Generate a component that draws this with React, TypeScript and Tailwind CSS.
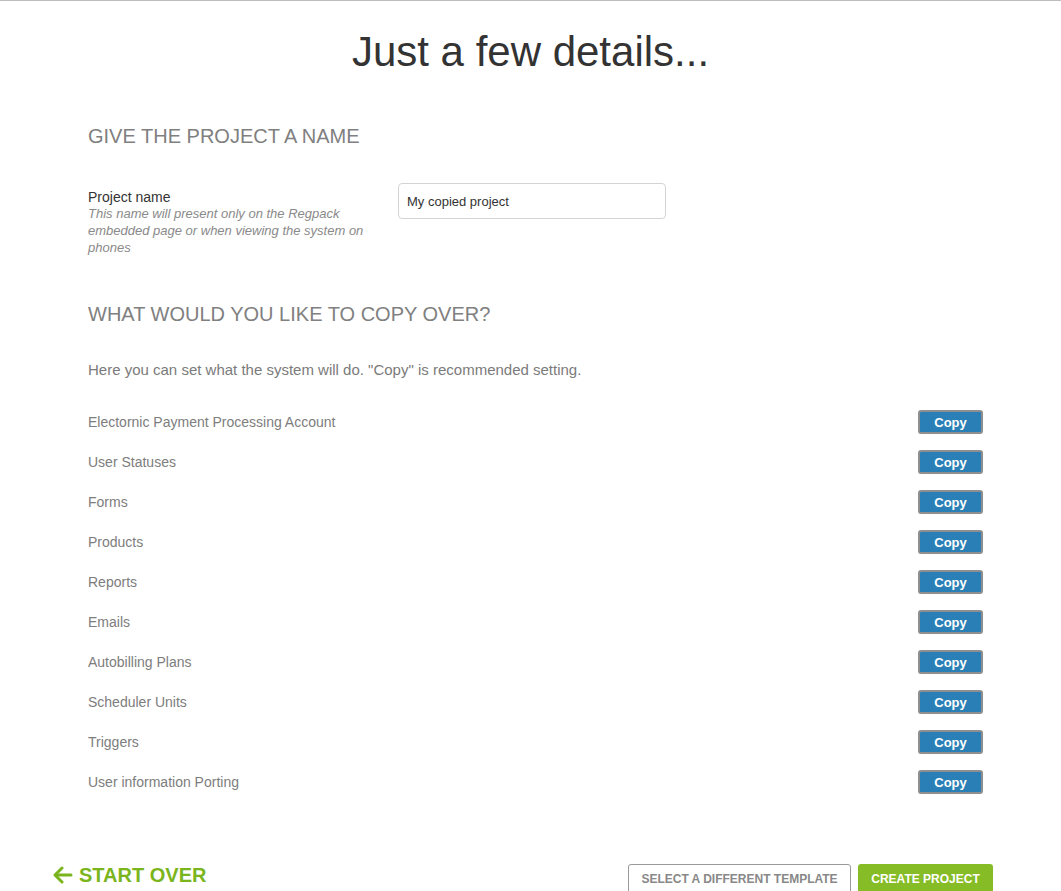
import React from 'react';

const items = [
  'Electornic Payment Processing Account',
  'User Statuses',
  'Forms',
  'Products',
  'Reports',
  'Emails',
  'Autobilling Plans',
  'Scheduler Units',
  'Triggers',
  'User information Porting',
];

const ArrowLeft = () => (
  <svg width="20" height="18" viewBox="0 0 20 18" fill="none" stroke="currentColor" strokeWidth="3" strokeLinecap="round" strokeLinejoin="round">
    <path d="M18 9H3" />
    <path d="M9 2L2 9l7 7" />
  </svg>
);

export default function App() {
  return (
    <div className="min-h-[891px] bg-white border-t border-[#bdbdbd] font-['Liberation_Sans',Arial,sans-serif] text-[#333]">
      <h1 className="pt-[26px] text-center text-[42px] leading-[50px] text-[#333]">
        Just a few details...
      </h1>

      <div className="ml-[88px] w-[895px]">
        <h2 className="mt-[48px] text-[20px] leading-[22px] text-[#808080] uppercase">Give the project a name</h2>

        <div className="mt-[36px] flex">
          <div className="w-[310px] pt-[6px]">
            <div className="text-[14px] leading-[16px] text-[#333]">Project name</div>
            <div className="w-[285px] text-[13px] leading-[17px] italic text-[#8a8a8a]">
              This name will present only on the Regpack embedded page or when viewing the system on phones
            </div>
          </div>
          <div>
            <input
              readOnly
              value="My copied project"
              className="w-[268px] h-[36px] rounded-[4px] border border-[#d4d4d4] px-[8px] text-[13px] text-[#333] outline-none"
            />
          </div>
        </div>

        <h2 className="mt-[47px] text-[20px] leading-[22px] text-[#808080] uppercase">What would you like to copy over?</h2>

        <p className="mt-[36px] text-[15px] leading-[18px] text-[#7b7b7b]">
          Here you can set what the system will do. "Copy" is recommended setting.
        </p>

        <div className="mt-[23px] flex flex-col">
          {items.map((item) => (
            <div key={item} className="h-[40px] flex items-center justify-between">
              <span className="text-[14px] text-[#7d7d7d]">{item}</span>
              <button className="w-[65px] h-[24px] rounded-[3px] border-2 border-[#8f8f8f] bg-[#2a7fb6] text-white text-[13px] font-bold leading-none">
                Copy
              </button>
            </div>
          ))}
        </div>
      </div>

      <div className="mt-[60px] ml-[53px] w-[940px] flex items-start justify-between">
        <button className="flex items-center gap-[6px] text-[#7ab51d] text-[20px] font-bold leading-none pt-[3px]">
          <ArrowLeft />
          <span>START OVER</span>
        </button>
        <div className="mt-[2px] flex gap-[7px]">
          <button className="w-[223px] h-[30px] rounded-[3px] border border-[#9a9a9a] bg-white text-[12px] font-bold text-[#888] leading-none">
            SELECT A DIFFERENT TEMPLATE
          </button>
          <button className="w-[135px] h-[30px] rounded-[3px] bg-[#86bc25] text-[12px] font-bold text-white leading-none">
            CREATE PROJECT
          </button>
        </div>
      </div>
    </div>
  );
}
